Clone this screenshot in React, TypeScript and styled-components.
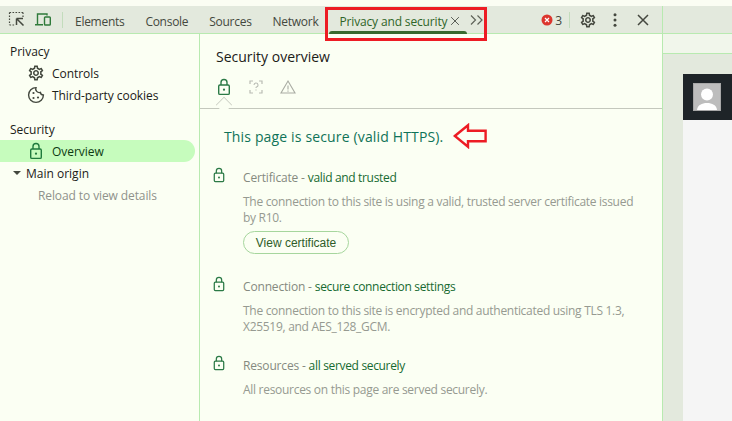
import React from "react";
import styled, { createGlobalStyle } from "styled-components";

const Global = createGlobalStyle`
  html, body { margin: 0; padding: 0; background: #fbfff3; }
  * { box-sizing: border-box; }
  body { font-family: "Open Sans", "Noto Sans", "Liberation Sans", sans-serif; }
`;

const Page = styled.div`
  position: relative;
  width: 732px;
  height: 421px;
  overflow: hidden;
  display: flex;
  flex-direction: column;
  background: #fbfff3;
`;
const TopStrip = styled.div`
  height: 6px;
  flex: none;
  background: #fbfdf3;
`;
const Columns = styled.div`
  flex: 1;
  display: flex;
  min-height: 0;
`;
const DevTools = styled.div`
  width: 663px;
  flex: none;
  display: flex;
  flex-direction: column;
  border-right: 1px solid #b8eab0;
`;
const Toolbar = styled.div`
  height: 28px;
  flex: none;
  display: flex;
  align-items: center;
  background: #e3e9dd;
  border-bottom: 1px solid #b8eab0;
  padding: 1px 10px 0 8px;
`;
const ToolIcon = styled.span`
  display: flex;
  width: 18px;
  height: 18px;
  margin-right: 8px;
  color: #45483f;
`;
const Divider = styled.span<{ $right: number }>`
  width: 1px;
  height: 16px;
  background: #c3dcbc;
  margin: 0 ${(p) => p.$right}px 0 2px;
`;
const TabLabel = styled.span`
  font-size: 12px;
  color: #43483e;
  margin-right: 21px;
  padding-top: 2px;
  letter-spacing: -0.28px;
  white-space: nowrap;
`;
const ActiveTab = styled.span`
  position: relative;
  align-self: flex-end;
  height: 26px;
  width: 138px;
  flex: none;
  display: flex;
  align-items: center;
  gap: 1px;
  margin-left: -10px;
  padding: 2px 0 0 10px;
  font-size: 12px;
  font-weight: 500;
  color: #2f6528;
  letter-spacing: -0.15px;
  white-space: nowrap;
  &::after {
    content: "";
    position: absolute;
    left: 0;
    right: 0;
    bottom: -1px;
    height: 3px;
    border-radius: 3px 3px 0 0;
    background: #386a2f;
  }
`;
const TabClose = styled.span`
  display: flex;
  color: #50544c;
`;
const MoreTabs = styled.span`
  display: flex;
  margin-left: 1px;
  color: #5e6258;
`;
const Spacer = styled.span`
  flex: 1;
`;
const ErrorCount = styled.span`
  display: flex;
  align-items: center;
  gap: 2px;
  font-size: 12px;
  color: #43483e;
  margin-right: 5px;
`;
const RightIcon = styled.span<{ $gap: number }>`
  display: flex;
  width: 18px;
  height: 18px;
  margin-left: ${(p) => p.$gap}px;
  color: #45483f;
`;
const Panels = styled.div`
  flex: 1;
  display: flex;
  min-height: 0;
`;
const Sidebar = styled.nav`
  width: 200px;
  flex: none;
  border-right: 1px solid #b8eab0;
  padding-top: 7px;
  background: #fbfff3;
`;
const SideHeading = styled.div<{ $top?: number }>`
  height: 21px;
  line-height: 22px;
  padding-left: 10px;
  margin-top: ${(p) => p.$top ?? 0}px;
  font-size: 12px;
  color: #1c2118;
`;
const SideItem = styled.div<{ $active?: boolean }>`
  height: 22px;
  width: 195px;
  display: flex;
  align-items: center;
  padding-left: 27px;
  gap: 7px;
  font-size: 12px;
  letter-spacing: -0.05px;
  color: ${(p) => (p.$active ? "#0d3a12" : "#1c2118")};
  background: ${(p) => (p.$active ? "#c6fcbd" : "transparent")};
  border-radius: 0 11px 11px 0;
`;
const SideIcon = styled.span<{ $color?: string }>`
  display: flex;
  width: 18px;
  height: 18px;
  color: ${(p) => p.$color ?? "#43483e"};
`;
const OriginRow = styled.div`
  height: 22px;
  display: flex;
  align-items: center;
  padding-left: 13px;
  gap: 5px;
  font-size: 12px;
  color: #1c2118;
`;
const Caret = styled.span`
  width: 0;
  height: 0;
  border-left: 4px solid transparent;
  border-right: 4px solid transparent;
  border-top: 4px solid #43483e;
`;
const SideHint = styled.div`
  height: 22px;
  line-height: 24px;
  padding-left: 38px;
  font-size: 12px;
  font-weight: 500;
  letter-spacing: -0.1px;
  color: #8f928b;
`;
const Content = styled.main`
  flex: 1;
  min-width: 0;
  display: flex;
  flex-direction: column;
`;
const OverviewHeader = styled.header`
  height: 75px;
  flex: none;
  position: relative;
  padding: 12px 0 0 15px;
  border-bottom: 1px solid #c4c8bd;
`;
const Title = styled.h1`
  margin: 0 0 0 1px;
  font-size: 14px;
  line-height: 22px;
  font-weight: 400;
  color: #1c2118;
`;
const StateIcons = styled.div`
  display: flex;
  gap: 14px;
  margin-top: 10px;
`;
const StateIcon = styled.span<{ $color: string }>`
  display: flex;
  width: 18px;
  height: 18px;
  color: ${(p) => p.$color};
`;
const Notch = styled.span`
  position: absolute;
  left: 16px;
  bottom: -5px;
  width: 16px;
  height: 16px;
  transform: rotate(45deg) scale(0.72);
  border-left: 1px solid #c4c8bd;
  border-top: 1px solid #c4c8bd;
  background: #fbfff3;
`;
const Body = styled.div`
  padding: 15px 0 0 24px;
`;
const Summary = styled.div`
  display: flex;
  align-items: center;
  gap: 10px;
  height: 24px;
  font-size: 14px;
  letter-spacing: 0.15px;
  color: #0f7358;
`;
const Sections = styled.div`
  margin-top: 19px;
  margin-left: -13px;
  display: flex;
  flex-direction: column;
`;
const Section = styled.section<{ $height: number }>`
  display: flex;
  height: ${(p) => p.$height}px;
  gap: 16px;
`;
const SectionIcon = styled.span`
  display: flex;
  width: 16px;
  height: 16px;
  color: #2b7a46;
  flex: none;
`;
const SectionBody = styled.div`
  width: 400px;
`;
const SectionTitle = styled.div`
  font-size: 12px;
  line-height: 16px;
  color: #858a80;
  margin-top: 3px;
  letter-spacing: -0.17px;
`;
const Good = styled.span`
  color: #166a31;
  letter-spacing: -0.33px;
`;
const Description = styled.p`
  margin: 8px 0 0;
  font-size: 12px;
  line-height: 16px;
  color: #969a91;
  letter-spacing: -0.29px;
`;
const CertButton = styled.button`
  display: block;
  margin-top: 5px;
  width: 106px;
  height: 23px;
  padding: 0;
  background: transparent;
  border: 1px solid #a6d69d;
  border-radius: 12px;
  font-family: "Liberation Sans", sans-serif;
  font-size: 12px;
  color: #2f5d28;
`;
const RedBox = styled.div`
  position: absolute;
  left: 325px;
  top: 7px;
  width: 162px;
  height: 34px;
  border: 3px solid #ed1c24;
  pointer-events: none;
`;
const PagePreview = styled.div`
  flex: 1;
  display: flex;
  flex-direction: column;
  min-width: 0;
`;
const PreviewBar = styled.div`
  height: 28px;
  flex: none;
  background: #e3e9dd;
  border-bottom: 1px solid #b8eab0;
`;
const PreviewStrip = styled.div`
  height: 20px;
  flex: none;
  background: #f1f6eb;
  border-bottom: 1px solid #b8eab0;
`;
const PreviewCanvas = styled.div`
  flex: 1;
  background: #e3e9dd;
  padding: 20px 0 0 20px;
`;
const Card = styled.div`
  height: 100%;
  background: #f5f5f5;
`;
const CardHead = styled.div`
  height: 46px;
  background: #1e2428;
  padding: 9px 0 0 10px;
`;
const Avatar = styled.div`
  display: flex;
  width: 28px;
  height: 28px;
  background: #bdbdbd;
  border: 1px solid #a8a8a8;
`;

const Svg: React.FC<{ size?: number; children: React.ReactNode }> = ({ size = 18, children }) => (
  <svg width={size} height={size} viewBox="0 0 18 18" fill="none" stroke="currentColor" strokeWidth="1.4">
    {children}
  </svg>
);
const Lock: React.FC<{ size?: number }> = ({ size }) => (
  <Svg size={size}>
    <rect x="3.7" y="7" width="10.6" height="9.4" rx="1.2" />
    <path d="M6 7V4.5a3 3 0 0 1 6 0V7" />
    <circle cx="9" cy="11.7" r="1.1" fill="currentColor" stroke="none" />
  </Svg>
);
const Gear: React.FC = () => (
  <svg width="18" height="18" viewBox="0 0 24 24" fill="currentColor">
    <path d="M19.43 12.98c.04-.32.07-.64.07-.98 0-.34-.03-.66-.07-.98l2.11-1.65c.19-.15.24-.42.12-.64l-2-3.46c-.09-.16-.26-.25-.44-.25-.06 0-.12.01-.17.03l-2.49 1c-.52-.4-1.08-.73-1.69-.98l-.38-2.65C14.46 2.18 14.25 2 14 2h-4c-.25 0-.46.18-.49.42l-.38 2.65c-.61.25-1.17.59-1.69.98l-2.49-1c-.06-.02-.12-.03-.18-.03-.17 0-.34.09-.43.25l-2 3.46c-.13.22-.07.49.12.64l2.11 1.65c-.04.32-.07.65-.07.98 0 .33.03.66.07.98l-2.11 1.65c-.19.15-.24.42-.12.64l2 3.46c.09.16.26.25.44.25.06 0 .12-.01.17-.03l2.49-1c.52.4 1.08.73 1.69.98l.38 2.65c.03.24.24.42.49.42h4c.25 0 .46-.18.49-.42l.38-2.65c.61-.25 1.17-.59 1.69-.98l2.49 1c.06.02.12.03.18.03.17 0 .34-.09.43-.25l2-3.46c.12-.22.07-.49-.12-.64l-2.11-1.65zm-1.98-1.71c.04.31.05.52.05.73 0 .21-.02.43-.05.73l-.14 1.13.89.7 1.08.84-.7 1.21-1.27-.51-1.04-.42-.9.68c-.43.32-.84.56-1.25.73l-1.06.43-.16 1.13-.2 1.35h-1.4l-.19-1.35-.16-1.13-1.06-.43c-.43-.18-.83-.41-1.23-.71l-.91-.7-1.06.43-1.27.51-.7-1.21 1.08-.84.89-.7-.14-1.13c-.03-.31-.05-.54-.05-.74s.02-.43.05-.73l.14-1.13-.89-.7-1.08-.84.7-1.21 1.27.51 1.04.42.9-.68c.43-.32.84-.56 1.25-.73l1.06-.43.16-1.13.2-1.35h1.39l.19 1.35.16 1.13 1.06.43c.43.18.83.41 1.23.71l.91.7 1.06-.43 1.27-.51.7 1.21-1.07.85-.89.7.14 1.13zM12 8c-2.21 0-4 1.79-4 4s1.79 4 4 4 4-1.79 4-4-1.79-4-4-4zm0 6c-1.1 0-2-.9-2-2s.9-2 2-2 2 .9 2 2-.9 2-2 2z" />
  </svg>
);

export default function App() {
  return (
    <Page>
      <Global />
      <TopStrip />
      <Columns>
        <DevTools>
          <Toolbar>
            <ToolIcon>
              <Svg>
                <path d="M1.5 1.5h13.5M1.5 1.5v12.5M15 1.5v5M1.5 14h6" strokeDasharray="1.6 1.4" strokeWidth="1.2" />
                <path d="M8.5 7.5h6.5M8.5 7.5V14M8.7 7.7L15.5 14.5" strokeWidth="1.5" />
              </Svg>
            </ToolIcon>
            <ToolIcon>
              <Svg>
                <path d="M3.5 13.5V3h9.5v1.5M1 13.8h8" stroke="#2f7a3a" />
                <rect x="10.5" y="6" width="5.8" height="8" rx="0.8" stroke="#2f7a3a" />
              </Svg>
            </ToolIcon>
            <Divider $right={12} />
            <TabLabel>Elements</TabLabel>
            <TabLabel>Console</TabLabel>
            <TabLabel>Sources</TabLabel>
            <TabLabel>Network</TabLabel>
            <ActiveTab>
              Privacy and security
              <TabClose>
                <Svg size={14}>
                  <path d="M4 4l10 10M14 4L4 14" strokeWidth="1.2" />
                </Svg>
              </TabClose>
            </ActiveTab>
            <MoreTabs>
              <Svg>
                <path d="M3 4.5L7.5 9 3 13.5M9.5 4.5L14 9l-4.5 4.5" strokeWidth="1.2" />
              </Svg>
            </MoreTabs>
            <Spacer />
            <ErrorCount>
              <svg width="12" height="12" viewBox="0 0 12 12">
                <circle cx="6" cy="6" r="5.5" fill="#dc362e" />
                <path d="M4 4l4 4M8 4L4 8" stroke="#fff" strokeWidth="1.2" />
              </svg>
              3
            </ErrorCount>
            <Divider $right={9} />
            <RightIcon $gap={0}>
              <Gear />
            </RightIcon>
            <RightIcon $gap={9}>
              <svg width="18" height="18" viewBox="0 0 18 18" fill="currentColor">
                <circle cx="9" cy="3.7" r="1.5" />
                <circle cx="9" cy="9" r="1.5" />
                <circle cx="9" cy="14.3" r="1.5" />
              </svg>
            </RightIcon>
            <RightIcon $gap={10}>
              <Svg>
                <path d="M4 4l10 10M14 4L4 14" strokeWidth="1.5" />
              </Svg>
            </RightIcon>
          </Toolbar>
          <Panels>
            <Sidebar>
              <SideHeading>Privacy</SideHeading>
              <SideItem>
                <SideIcon>
                  <Gear />
                </SideIcon>
                Controls
              </SideItem>
              <SideItem>
                <SideIcon>
                  <Svg>
                    <path d="M9 1.6a7.4 7.4 0 1 0 7.4 7.4 3 3 0 0 1-3-2.6A3.6 3.6 0 0 1 9 1.6z" />
                    <circle cx="6.5" cy="7" r="1.1" fill="currentColor" stroke="none" />
                    <circle cx="6.5" cy="12" r="1.1" fill="currentColor" stroke="none" />
                    <circle cx="11" cy="11.5" r="1.1" fill="currentColor" stroke="none" />
                  </Svg>
                </SideIcon>
                Third-party cookies
              </SideItem>
              <SideHeading $top={13}>Security</SideHeading>
              <SideItem $active>
                <SideIcon $color="#1f7a3d">
                  <Lock />
                </SideIcon>
                Overview
              </SideItem>
              <OriginRow>
                <Caret />
                Main origin
              </OriginRow>
              <SideHint>Reload to view details</SideHint>
            </Sidebar>
            <Content>
              <OverviewHeader>
                <Title>Security overview</Title>
                <StateIcons>
                  <StateIcon $color="#2b7a46">
                    <Lock />
                  </StateIcon>
                  <StateIcon $color="#b9bcb4">
                    <Svg>
                      <path d="M3 6V3h3M12 3h3v3M3 12v3h3M15 12v3h-3" strokeWidth="1.2" />
                      <path d="M7 7a2 2 0 1 1 2.5 2c-.4.2-.5.5-.5 1M9 11.5v1" strokeWidth="1.1" />
                    </Svg>
                  </StateIcon>
                  <StateIcon $color="#a9aca3">
                    <Svg>
                      <path d="M9 3l7 12H2z" strokeWidth="1.1" />
                      <path d="M9 7.5v4M9 12.5v1.2" strokeWidth="1.1" />
                    </Svg>
                  </StateIcon>
                </StateIcons>
                <Notch />
              </OverviewHeader>
              <Body>
                <Summary>
                  This page is secure (valid HTTPS).
                  <svg width="34" height="26" viewBox="0 0 34 26" fill="none">
                    <path d="M1.8 13L15 2.2v5.5h17.6v10.6H15v5.5z" stroke="#ed1c24" strokeWidth="2.4" fill="#fbfff3" />
                  </svg>
                </Summary>
                <Sections>
                  <Section $height={109}>
                    <SectionIcon>
                      <Lock size={16} />
                    </SectionIcon>
                    <SectionBody>
                      <SectionTitle>
                        Certificate - <Good>valid and trusted</Good>
                      </SectionTitle>
                      <Description>
                        The connection to this site is using a valid, trusted server certificate issued by R10.
                      </Description>
                      <CertButton>View certificate</CertButton>
                    </SectionBody>
                  </Section>
                  <Section $height={79}>
                    <SectionIcon>
                      <Lock size={16} />
                    </SectionIcon>
                    <SectionBody>
                      <SectionTitle>
                        Connection - <Good>secure connection settings</Good>
                      </SectionTitle>
                      <Description>
                        The connection to this site is encrypted and authenticated using TLS 1.3, X25519, and AES_128_GCM.
                      </Description>
                    </SectionBody>
                  </Section>
                  <Section $height={50}>
                    <SectionIcon>
                      <Lock size={16} />
                    </SectionIcon>
                    <SectionBody>
                      <SectionTitle>
                        Resources - <Good>all served securely</Good>
                      </SectionTitle>
                      <Description>All resources on this page are served securely.</Description>
                    </SectionBody>
                  </Section>
                </Sections>
              </Body>
            </Content>
          </Panels>
        </DevTools>
        <PagePreview>
          <PreviewBar />
          <PreviewStrip />
          <PreviewCanvas>
            <Card>
              <CardHead>
                <Avatar>
                  <svg width="26" height="26" viewBox="0 0 26 26" fill="#fff">
                    <circle cx="13" cy="10.5" r="6" />
                    <path d="M3 26c.5-5 5-7 10-7s9.5 2 10 7z" />
                  </svg>
                </Avatar>
              </CardHead>
            </Card>
          </PreviewCanvas>
        </PagePreview>
      </Columns>
      <RedBox />
    </Page>
  );
}
